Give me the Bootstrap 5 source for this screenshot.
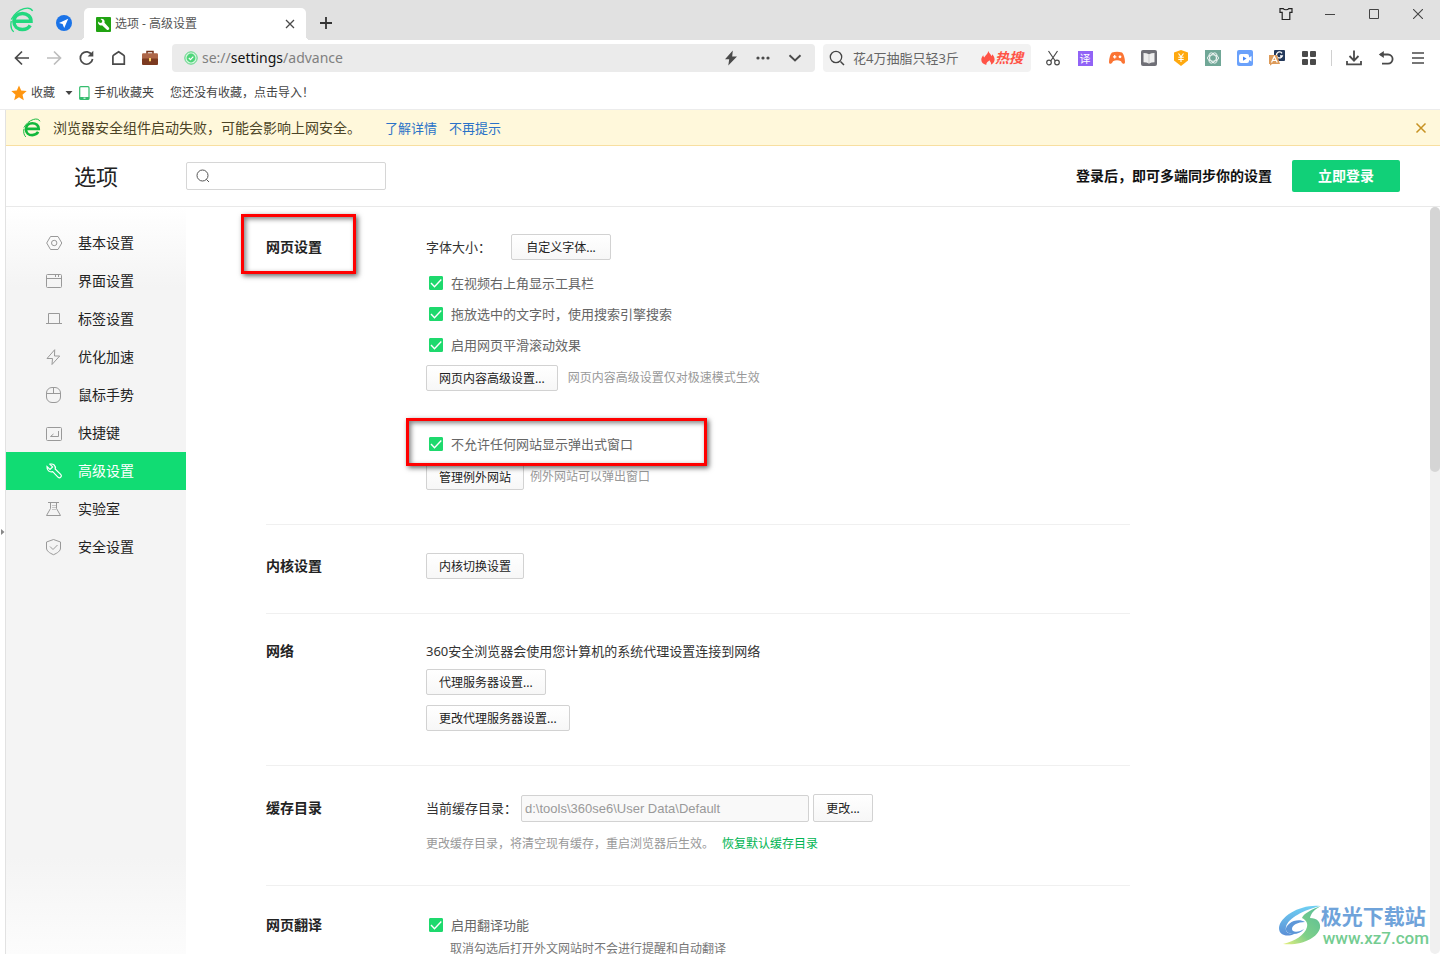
<!DOCTYPE html>
<html lang="zh-CN">
<head>
<meta charset="utf-8">
<meta name="viewport" content="width=device-width, initial-scale=1">
<title>选项 - 高级设置</title>
<link href="https://cdn.jsdelivr.net/npm/bootstrap@5.3.0/dist/css/bootstrap.min.css" rel="stylesheet">
<style>
:root{--ink:#222;--green:#11dc73}
body{font-family:"Noto Sans","Noto Sans CJK SC",sans-serif;font-size:13px;line-height:18px;color:#333;background:#fff}
button,input{font-family:inherit}
svg{display:block;flex:none}
.plain{border:0;background:none;padding:0;color:#4a4a4a;display:flex;align-items:center;justify-content:center;flex:none}
.fs12{font-size:12px}.fs14{font-size:14px}
/* window frame */
.titlebar{height:40px;background:#e1e1e1}
.brand-box{width:43px;height:40px}
.pin-box{width:41px;height:46px}
.page-tab{width:222px;height:32px;background:#fff;border-radius:5px 5px 0 0;padding:0 10px 0 12px;color:#555;position:relative}
.page-tab::before,.page-tab::after{content:"";position:absolute;bottom:0;width:4px;height:4px}
.page-tab::before{left:-4px;background:radial-gradient(circle at 0 0,#e1e1e1 4px,#fff 4px)}
.page-tab::after{right:-4px;background:radial-gradient(circle at 100% 0,#e1e1e1 4px,#fff 4px)}
.new-tab{width:24px;height:34px}
.win{width:44px;height:28px}
.toolbar{height:36px;padding:0 6px}
.tool{width:32px;height:32px}
.omni{height:28px;background:#ebebeb;border-radius:4px;padding-left:12px;margin-left:6px}
.omni-url{font-size:14px;color:#808080}
.omni-url b{font-weight:400;color:#111}
.hunt{width:208px;height:28px;background:#f2f2f2;border-radius:4px;padding:0 8px 0 6px;margin:0 6px 0 8px}
.hunt input{border:0;background:none;outline:0;width:100%;padding:0;color:#666;font-size:13px}
.hunt input::placeholder{color:#666;opacity:1}
.hot{color:#ff5346;font-size:14px;font-weight:700;font-style:italic;text-decoration:none;white-space:nowrap}
.trans{width:15px;height:15px;background:#9163f6;font-size:11px;line-height:15px}
.tool-rule{width:1px;height:16px;background:#d0d0d0;margin:0 6px}
.marks{height:34px;padding-left:11px;border-bottom:1px solid #ececec}
.marks a{color:#444;text-decoration:none}
/* page */
.gutter{width:6px;border-right:1px solid #e2e2e2}
.notice{height:36px;background:#fff8db;border-bottom:1px solid #f8dfa0;padding:0 12px 0 17px;color:#4c4426}
.notice a{color:#2a72c8;text-decoration:none}
.page-head{height:61px;border-bottom:1px solid #e9e9e9;padding-right:40px}
.page-title{width:180px;font-size:22px;line-height:30px;font-weight:400;color:var(--ink)}
.find{width:200px;height:28px;border:1px solid #d6d6d6;border-radius:2px;padding-left:9px}
.find input{border:0;outline:0;width:150px;background:none}
.login{width:108px;height:32px;background:#11d078;color:#fff;border:0;border-radius:2px;font-weight:700;font-size:14px;padding:0;margin-left:20px}
.side{width:180px;padding-top:17px;background:linear-gradient(#fff 0,#f4f4f4 80px,#f4f4f4 650px,#fcfcfc 747px)}
.side .nav-link{height:38px;padding:0 0 0 38px;gap:14px;font-size:14px;color:var(--ink);border-radius:0}
.side .nav-link svg{color:#999}
.side .nav-link.active,.side .nav-link.active svg{background:var(--green);color:#fff}
.settings{padding-left:80px}
.block{max-width:864px;padding:28px 0 34px;border-bottom:1px solid #f0f0f0}
.block-name{width:160px;font-size:14px;line-height:26px;font-weight:700;color:var(--ink);margin:0}
.block.tight .block-name{line-height:18px}
.block.tall .block-name{line-height:28px}
.cmd{height:26px;border:1px solid #d2d2d2;border-radius:2px;background:linear-gradient(#fff,#f7f7f7);color:var(--ink);font-size:12px;line-height:18px;padding:1px 12px 0;white-space:nowrap}
.cmd.wide{min-width:100px}.cmd.high{height:28px;min-width:60px}
.tick{height:31px;padding-left:3px;gap:8px;color:#666}
.tick .form-check-input{width:14px;height:14px;margin:0;border-radius:1px;flex:none}
.tick .form-check-input:checked{border-color:#1ed96d;background-color:#1ed96d;background-image:url("data:image/svg+xml,%3csvg xmlns='http://www.w3.org/2000/svg' viewBox='0 0 14 14'%3e%3cpath d='M2 7l3.500 3.800L12.300 3.500' fill='none' stroke='white' stroke-width='1.4'/%3e%3c/svg%3e");background-size:14px 14px}
.tick.short{height:22px}
.gap-block{margin-top:37px;margin-bottom:5px}
.faint{color:#999;font-size:12px}
.path{width:288px;height:27px;border:1px solid #d2d2d2;border-radius:2px;background:#f9f9f9;color:#999;font:13px "Liberation Sans",sans-serif;padding:0 3px}
.restore{color:#00b552;text-decoration:none}
/* red callouts over the settings */
.callout{position:absolute;border:3px solid #f00;box-shadow:2px 2px 5px rgba(0,0,0,.6),inset 2px 2px 5px rgba(0,0,0,.5);pointer-events:none;z-index:2}
.callout-name{left:-25px;top:-20px;width:115px;height:60px}
.callout-popup{left:-20px;top:-10px;width:301px;height:48px}
.rail{width:10px;background:#f0f0f0;border-radius:5px}
.rail-thumb{height:35.5%;background:#d5d5d5;border-radius:5px}
.stamp{position:absolute;right:11px;bottom:7px;z-index:3}
.stamp-name{font-size:21px;line-height:25px;font-weight:700;color:#6fa3da}
.stamp-site{font:500 17px/18px Roboto,"Liberation Sans",sans-serif;color:#74cc91;padding-left:2px}
</style>
</head>
<body class="vh-100 overflow-hidden d-flex flex-column position-relative">
<svg width="0" height="0" class="position-absolute" aria-hidden="true"><defs>
<symbol id="e-logo" viewBox="0 0 24 26"><g fill="none" stroke="currentColor"><path d="M4 14.200h17c0-4.600-3.600-7.600-8.500-7.600-5.200 0-8.600 3.300-8.600 7.900 0 4.800 3.500 8 8.500 8 3.600 0 6.300-1.500 7.800-4.200" stroke-width="3.500"/><path d="M1.200 12.500C4 7.500 8.500 3.200 14 1.600c3.500-1 7-.8 8.600 2.400M1.300 14c-1 4.500 0 8.500 2.400 10.900" stroke-width="1.300"/></g></symbol>
</defs></svg>

<header>
  <div class="titlebar d-flex align-items-end">
    <div class="brand-box d-flex align-items-center justify-content-center"><svg width="24" height="26" style="color:#22d87f"><use href="#e-logo"/></svg></div>
    <button class="plain pin-box align-self-start" aria-label="导航"><svg width="16" height="16" viewBox="0 0 16 16"><circle cx="8" cy="8" r="8" fill="#1a73e8"/><path d="M12.200 3.800L3 8l3.600 1.100L8.200 13z" fill="#fff"/></svg></button>
    <div class="page-tab d-flex align-items-center">
      <svg width="15" height="15" viewBox="0 0 15 15"><rect width="15" height="15" rx="1" fill="#21a312"/><path d="M4.500 2a3 3 0 0 1 4 3.800l4.300 4.600a1.500 1.500 0 0 1-2.200 2.100L6 8.200A3 3 0 0 1 2.200 4.400L4 6l2-.5.300-1.800z" fill="#fff"/></svg>
      <span class="fs12 ms-1 flex-grow-1">选项 - 高级设置</span>
      <button class="plain" aria-label="关闭标签"><svg width="12" height="12" viewBox="0 0 12 12"><path d="M2 2l8 8M10 2l-8 8" stroke="currentColor" stroke-width="1.300"/></svg></button>
    </div>
    <button class="plain new-tab ms-2" aria-label="新标签"><svg width="14" height="14" viewBox="0 0 14 14"><path d="M7 1v12M1 7h12" stroke="#333" stroke-width="1.800"/></svg></button>
    <div class="ms-auto d-flex align-self-start">
      <button class="plain win" aria-label="皮肤"><svg width="14" height="14" viewBox="0 0 14 14"><path d="M1 1.600h3.300c.6 1.500 4.800 1.500 5.400 0H13v3.800h-2.200v7.100H3.200V5.400H1z" fill="none" stroke="#222" stroke-width="1.200"/></svg></button>
      <button class="plain win" aria-label="最小化"><svg width="10" height="10" viewBox="0 0 10 10"><path d="M0 5.500h10" stroke="#444"/></svg></button>
      <button class="plain win" aria-label="最大化"><svg width="10" height="10" viewBox="0 0 10 10"><path d="M.5.500h9v9h-9z" fill="none" stroke="#444"/></svg></button>
      <button class="plain win" aria-label="关闭"><svg width="10" height="10" viewBox="0 0 10 10"><path d="M0 0l10 10M10 0L0 10" stroke="#444" stroke-width="1.100"/></svg></button>
    </div>
  </div>

  <div class="toolbar d-flex align-items-center">
    <button class="plain tool" aria-label="后退"><svg width="16" height="16" viewBox="0 0 16 16"><path d="M15 8H2M8 1.500L1.500 8 8 14.500" fill="none" stroke="currentColor" stroke-width="1.700"/></svg></button>
    <button class="plain tool" aria-label="前进"><svg width="16" height="16" viewBox="0 0 16 16"><path d="M1 8h13M8 1.500L14.500 8 8 14.500" fill="none" stroke="#bdbdbd" stroke-width="1.700"/></svg></button>
    <button class="plain tool" aria-label="刷新"><svg width="16" height="16" viewBox="0 0 16 16"><path d="M14 5.200A6.200 6.200 0 1 0 14.600 9" fill="none" stroke="currentColor" stroke-width="1.700"/><path d="M15.300.8v5.700H9.600z" fill="currentColor"/></svg></button>
    <button class="plain tool" aria-label="主页"><svg width="16" height="16" viewBox="0 0 16 16"><path d="M8.600 1.700l4.800 3.200q.9.500.9 1.500v7.700H2.900V6.400q0-1 .9-1.500z" fill="none" stroke="currentColor" stroke-width="1.700"/></svg></button>
    <button class="plain tool" aria-label="工具箱"><svg width="18" height="16" viewBox="0 0 18 16"><path d="M6 4V1.500h6V4" fill="none" stroke="#75351c" stroke-width="1.500"/><rect x="1" y="3.200" width="16" height="6" rx="1.200" fill="#ad6648"/><path d="M1 8.600h16V14q0 1-1 1H2q-1 0-1-1z" fill="#7c3a20"/><rect x="8" y="8" width="2" height="3.300" fill="#ffd66b"/></svg></button>
    <div class="omni d-flex align-items-center flex-grow-1">
      <svg width="14" height="14" viewBox="0 0 14 14"><circle cx="7" cy="7" r="6.200" fill="#d3f5dd" stroke="#58d480"/><circle cx="7" cy="7" r="4.400" fill="#4fd57a"/><path d="M4.800 7l1.700 1.600L9.300 5.600" fill="none" stroke="#fff" stroke-width="1.200"/></svg>
      <span class="omni-url ms-1 flex-grow-1">se://<b>settings</b>/advance</span>
      <button class="plain tool" aria-label="极速模式"><svg width="14" height="16" viewBox="0 0 14 16"><path d="M8.800.5L1 9.200h4.200L4.300 15.500 13 6.600H8.200z" fill="currentColor"/></svg></button>
      <button class="plain tool" aria-label="更多"><svg width="14" height="4" viewBox="0 0 14 4"><g fill="currentColor"><circle cx="2" cy="2" r="1.600"/><circle cx="7" cy="2" r="1.600"/><circle cx="12" cy="2" r="1.600"/></g></svg></button>
      <button class="plain tool me-1" aria-label="展开"><svg width="14" height="8" viewBox="0 0 14 8"><path d="M1.500 1.200L7 6.500l5.500-5.300" fill="none" stroke="currentColor" stroke-width="1.900"/></svg></button>
    </div>
    <div class="hunt d-flex align-items-center">
      <svg width="16" height="16" viewBox="0 0 16 16"><path d="M11.500 11.500L15 15" stroke="#444" stroke-width="1.500"/><circle cx="7" cy="7" r="5.700" fill="none" stroke="#444" stroke-width="1.300"/></svg>
      <input class="ms-2" aria-label="搜索" placeholder="花4万抽脂只轻3斤">
      <a class="hot d-flex align-items-center" href="#"><svg width="14" height="14" viewBox="0 0 14 14"><path d="M7.300 0c.6 2.300 3 3.300 3.200 5.200.5-.5.700-1.200.7-1.900 3.600 3.500 3.200 8.700-1.400 10.500.9-1.800-.6-3-1.300-4.600C7 10.500 5 11.500 5.300 14-.8 12.500-.7 7.300 2.300 4.200c.1 1 .3 1.600.9 2.200C4.300 4.500 7 3 7.300 0z" fill="currentColor"/></svg><span>热搜</span></a>
    </div>
    <button class="plain tool" aria-label="截图"><svg width="16" height="16" viewBox="0 0 16 16"><path d="M3.500 1l6.800 10M12.500 1L5.700 11" stroke="currentColor" stroke-width="1.200"/><g fill="none" stroke="currentColor" stroke-width="1.200"><circle cx="4" cy="12.500" r="2.300"/><circle cx="12" cy="12.500" r="2.300"/></g></svg></button>
    <button class="plain tool" aria-label="翻译"><span class="trans d-flex align-items-center justify-content-center text-white">译</span></button>
    <button class="plain tool" aria-label="游戏"><svg width="18" height="16" viewBox="0 0 18 16"><path d="M4 2.500q5-1.500 10 0 2.600 2.500 3 9.500c0 2.500-2.500 2.500-4-.8q-4-2-8 0C3.500 14.500 1 14.500 1 12q.4-7 3-9.500z" fill="#fb7433"/><path d="M5 6.800h3.400M6.700 5.100v3.400" stroke="#fff" stroke-width="1.200"/><circle cx="12" cy="6.800" r="1.400" fill="#fff"/></svg></button>
    <button class="plain tool" aria-label="阅读"><svg width="16" height="16" viewBox="0 0 16 16"><rect width="16" height="16" rx="2" fill="#6f6f76"/><path d="M2.500 3q3 0 5.500 1.300Q10.500 3 13.500 3v9.300q-3 0-5.500 1.300-2.500-1.300-5.500-1.300z" fill="#eee"/><path d="M8 4.300v9.300" stroke="#bbb" stroke-width=".7"/></svg></button>
    <button class="plain tool" aria-label="优惠"><svg width="16" height="16" viewBox="0 0 16 16"><path d="M8 0l7 2.500v8L8 16l-7-5.500v-8z" fill="#ffa90f"/><path d="M5.500 3.500L8 6.800l2.500-3.300M8 6.800V12M5.300 7.300h5.400M5.300 9.500h5.400" fill="none" stroke="#fff" stroke-width="1.100"/></svg></button>
    <button class="plain tool" aria-label="智能助手"><svg width="16" height="16" viewBox="0 0 16 16"><rect width="16" height="16" fill="#70a797"/><g fill="none" stroke="#fff" stroke-width=".8"><ellipse cx="8" cy="8" rx="5.600" ry="3.200"/><ellipse cx="8" cy="8" rx="5.600" ry="3.200" transform="rotate(60 8 8)"/><ellipse cx="8" cy="8" rx="5.600" ry="3.200" transform="rotate(120 8 8)"/></g></svg></button>
    <button class="plain tool" aria-label="视频"><svg width="16" height="16" viewBox="0 0 16 16"><rect width="16" height="16" rx="2" fill="#6aa1fb"/><rect x="2" y="4" width="10" height="9" rx="2" fill="#fff"/><path d="M12 7.500l2.500-1.500v5.500L12 10z" fill="#fff"/><path d="M6 6.500l3.500 2.100L6 10.700z" fill="#4587f7"/></svg></button>
    <button class="plain tool" aria-label="双语"><svg width="16" height="16" viewBox="0 0 16 16"><rect x="5" width="11" height="11" rx="1" fill="#24395b"/><path d="M13 3.300a3 3 0 1 0 .3 2.700H11" fill="none" stroke="#fff" stroke-width="1.300"/><path d="M0 5h8l3 9H3l-2 1.800V14H0z" fill="#dd9b5a"/><path d="M2.500 12.500L5.300 6.500 8.300 12.500M3.500 10.500h4" fill="none" stroke="#fff" stroke-width="1.200"/></svg></button>
    <button class="plain tool" aria-label="扩展"><svg width="14" height="14" viewBox="0 0 14 14"><g fill="currentColor"><rect width="6" height="6" rx="1"/><rect x="8" width="6" height="6" rx="1"/><rect y="8" width="6" height="6" rx="1"/><rect x="8" y="8" width="6" height="6" rx="1"/></g></svg></button>
    <span class="tool-rule"></span>
    <button class="plain tool" aria-label="下载"><svg width="16" height="16" viewBox="0 0 16 16"><path d="M8 .5v10M3.500 6L8 10.600 12.500 6M1 11v3.300h14V11" fill="none" stroke="currentColor" stroke-width="1.800"/></svg></button>
    <button class="plain tool" aria-label="恢复"><svg width="16" height="16" viewBox="0 0 16 16"><path d="M2.500 4.500H10a4.600 4.600 0 0 1 0 9.200H4" fill="none" stroke="currentColor" stroke-width="1.800"/><path d="M.8 4.500L5.800 1v7z" fill="currentColor"/></svg></button>
    <button class="plain tool" aria-label="菜单"><svg width="12" height="14" viewBox="0 0 12 14"><path d="M0 2h12M0 7h12M0 12h12" stroke="currentColor" stroke-width="1.700"/></svg></button>
  </div>

  <nav class="marks d-flex align-items-center fs12" aria-label="收藏栏">
    <a href="#" class="d-flex align-items-center"><svg width="16" height="16" viewBox="0 0 16 16" class="me-1"><path d="M8 .5l2.200 5.100 5.500.5-4.200 3.600 1.300 5.500L8 12.300l-4.800 2.900 1.300-5.500L.3 6.100l5.500-.5z" fill="#ff9610"/></svg>收藏</a>
    <button class="plain ms-2" aria-label="收藏列表"><svg width="12" height="6" viewBox="0 0 12 6"><path d="M2.500 1h7L6 5z" fill="#444"/></svg></button>
    <a href="#" class="d-flex align-items-center ms-1"><svg width="11" height="14" viewBox="0 0 11 14" class="me-1"><rect x=".7" y=".7" width="9.300" height="12.600" rx="1" fill="none" stroke="#35bd6e" stroke-width="1.200"/><path d="M.5 11h9.700v2.500H.5z" fill="#35bd6e"/><path d="M4.500 12.200h2" stroke="#fff"/></svg>手机收藏夹</a>
    <a href="#" class="ms-3">您还没有收藏，点击导入！</a>
  </nav>
</header>

<div class="d-flex flex-grow-1 overflow-hidden">
  <div class="gutter flex-shrink-0 d-flex align-items-center"><svg width="5" height="8" viewBox="0 0 5 8"><path d="M1 1l3.500 3L1 7z" fill="#888"/></svg></div>
  <div class="d-flex flex-column flex-grow-1 overflow-hidden">
    <div class="notice d-flex align-items-center flex-shrink-0" role="status">
      <svg width="18" height="20" style="color:#12b83c"><use href="#e-logo"/></svg>
      <span class="fs14" style="margin-left:12px">浏览器安全组件启动失败，可能会影响上网安全。</span>
      <a href="#" class="ms-4">了解详情</a><a href="#" class="ms-2 ps-1 flex-grow-1">不再提示</a>
      <button class="plain" aria-label="关闭提示"><svg width="14" height="14" viewBox="0 0 14 14"><path d="M2.500 2.500l9 9M11.500 2.500l-9 9" stroke="#c79222" stroke-width="1.500"/></svg></button>
    </div>
    <div class="page-head d-flex align-items-center flex-shrink-0">
      <h1 class="page-title text-center m-0">选项</h1>
      <label class="find d-flex align-items-center gap-2"><svg width="14" height="14" viewBox="0 0 14 14"><circle cx="6.500" cy="6.500" r="5.500" fill="none" stroke="#555"/><path d="M10.300 10.300L13 13" stroke="#555"/></svg><input type="text" aria-label="搜索设置"></label>
      <strong class="ms-auto fs14" style="color:#111">登录后，即可多端同步你的设置</strong>
      <button class="login">立即登录</button>
    </div>
    <div class="d-flex flex-grow-1 overflow-hidden">
      <nav class="side nav flex-column flex-nowrap flex-shrink-0" aria-label="设置分类">
        <a class="nav-link d-flex align-items-center" href="#"><svg width="20" height="20" viewBox="0 0 20 20" fill="none" stroke="currentColor"><path d="M6.500 3.500h7.500l3.800 6.500-3.800 6.500H6.500L2.700 10z"/><circle cx="10.200" cy="10" r="2.700"/></svg>基本设置</a>
        <a class="nav-link d-flex align-items-center" href="#"><svg width="20" height="20" viewBox="0 0 20 20" fill="none" stroke="currentColor"><rect x="2.500" y="3.500" width="15" height="13" rx="1"/><path d="M2.500 7.500h15M11.500 4v2M14.500 4v2"/></svg>界面设置</a>
        <a class="nav-link d-flex align-items-center" href="#"><svg width="20" height="20" viewBox="0 0 20 20" fill="none" stroke="currentColor"><path d="M2 14.500h16M4.500 14.500v-10h11v10"/></svg>标签设置</a>
        <a class="nav-link d-flex align-items-center" href="#"><svg width="20" height="20" viewBox="0 0 20 20" fill="none" stroke="currentColor"><path d="M10.700 2.700L3 11.500h5.500l-.5 6 7.700-8.500h-5.200z"/></svg>优化加速</a>
        <a class="nav-link d-flex align-items-center" href="#"><svg width="20" height="20" viewBox="0 0 20 20" fill="none" stroke="currentColor"><rect x="2.500" y="2.500" width="14" height="15" rx="5.500"/><path d="M2.500 8.500h14M9.500 2.500v6"/></svg>鼠标手势</a>
        <a class="nav-link d-flex align-items-center" href="#"><svg width="20" height="20" viewBox="0 0 20 20" fill="none" stroke="currentColor"><rect x="2.500" y="4.500" width="15" height="13" rx="1"/><path d="M14.500 8v5.500H6.500l3-2.500"/></svg>快捷键</a>
        <a class="nav-link active d-flex align-items-center" aria-current="page" href="#"><svg width="20" height="20" viewBox="0 0 20 20" fill="none" stroke="currentColor" stroke-width="1.200"><path d="M6 3.200c3.200-.9 6 1.500 5.200 4.800l5.700 5.600c1.500 1.700-1 4.200-2.700 2.700L8.700 10.600c-3.200 1-6-1.300-5.700-5l3 2.800 2.600-2.500z"/></svg>高级设置</a>
        <a class="nav-link d-flex align-items-center" href="#"><svg width="20" height="20" viewBox="0 0 20 20" fill="none" stroke="currentColor"><path d="M4 3.500h11M6.500 3.500v6l-4 7h14l-4-7v-6"/><path d="M9 6v6M11 6v6" stroke-dasharray="1 1"/></svg>实验室</a>
        <a class="nav-link d-flex align-items-center" href="#"><svg width="20" height="20" viewBox="0 0 20 20" fill="none" stroke="currentColor"><path d="M9.500 2.500L2.500 5v6c0 3 3 5 7 6.700 4-1.700 7-3.700 7-6.700V5z"/><path d="M6 9.500l3 3 4.500-4.500"/></svg>安全设置</a>
      </nav>

      <main class="settings flex-grow-1 overflow-hidden">
        <section class="block d-flex" style="padding-top:27px">
          <div class="position-relative align-self-start"><h2 class="block-name">网页设置</h2><span class="callout callout-name"></span></div>
          <div>
            <div class="d-flex align-items-center" style="margin-bottom:7px"><span>字体大小：</span><button class="cmd wide" style="margin-left:20px">自定义字体...</button></div>
            <label class="tick d-flex align-items-center"><input class="form-check-input" type="checkbox" checked>在视频右上角显示工具栏</label>
            <label class="tick d-flex align-items-center"><input class="form-check-input" type="checkbox" checked>拖放选中的文字时，使用搜索引擎搜索</label>
            <label class="tick d-flex align-items-center"><input class="form-check-input" type="checkbox" checked>启用网页平滑滚动效果</label>
            <div class="d-flex align-items-center" style="margin-top:5px"><button class="cmd">网页内容高级设置...</button><span class="faint" style="margin-left:10px">网页内容高级设置仅对极速模式生效</span></div>
            <div class="gap-block position-relative">
              <label class="tick d-flex align-items-center"><input class="form-check-input" type="checkbox" checked>不允许任何网站显示弹出式窗口</label>
              <span class="callout callout-popup"></span>
            </div>
            <div class="d-flex align-items-center"><button class="cmd">管理例外网站</button><span class="faint" style="margin-left:6px">例外网站可以弹出窗口</span></div>
          </div>
        </section>
        <section class="block d-flex">
          <h2 class="block-name">内核设置</h2>
          <div><button class="cmd d-block">内核切换设置</button></div>
        </section>
        <section class="block tight d-flex">
          <h2 class="block-name">网络</h2>
          <div>
            <p style="margin-bottom:9px">360安全浏览器会使用您计算机的系统代理设置连接到网络</p>
            <button class="cmd d-block" style="margin-bottom:10px">代理服务器设置...</button>
            <button class="cmd d-block">更改代理服务器设置...</button>
          </div>
        </section>
        <section class="block tall d-flex" style="padding-bottom:32px">
          <h2 class="block-name">缓存目录</h2>
          <div>
            <div class="d-flex align-items-center gap-1"><label for="cache">当前缓存目录：</label><input id="cache" class="path" type="text" readonly value="d:\tools\360se6\User Data\Default"><button class="cmd high">更改...</button></div>
            <div class="faint d-flex" style="margin-top:13px"><span>更改缓存目录，将清空现有缓存，重启浏览器后生效。</span><a class="restore ms-2" href="#">恢复默认缓存目录</a></div>
          </div>
        </section>
        <section class="block d-flex">
          <h2 class="block-name" style="line-height:22px">网页翻译</h2>
          <div>
            <label class="tick short d-flex align-items-center"><input class="form-check-input" type="checkbox" checked>启用翻译功能</label>
            <div class="faint ms-4 mt-1" style="color:#777">取消勾选后打开外文网站时不会进行提醒和自动翻译</div>
          </div>
        </section>
      </main>
      <div class="rail flex-shrink-0"><div class="rail-thumb"></div></div>
    </div>
  </div>
</div>

<div class="stamp d-flex align-items-center">
  <svg width="42" height="42" viewBox="0 0 42 42"><defs><linearGradient id="sky" x2="0" y2="1"><stop stop-color="#6fd0f3"/><stop offset="1" stop-color="#5b8fd6"/></linearGradient><linearGradient id="leaf" x1="1" x2="0" y2="1"><stop stop-color="#57bd97"/><stop offset=".6" stop-color="#7fd089"/><stop offset="1" stop-color="#e9f07e"/></linearGradient></defs>
  <path d="M41 1C22-1 1 11 0 23c0 8 9 9 15 6-6 0-9-2-8-7C9 13 25 5 41 1z" fill="url(#sky)"/><path d="M26 17c-8-5-20 2-19 8 1 5 13 6 18-1-4 3-12 4-12 0 0-4 6-7 13-7z" fill="#5d97d8"/><path d="M42 1C33 4 24 9 23 13c4 2 6 5 5 9-2 8-12 14-24 17 20 2 35-7 37-16 1-6-3-10-10-10 1-5 5-9 11-12z" fill="url(#leaf)"/></svg>
  <div><div class="stamp-name">极光下载站</div><div class="stamp-site">www.xz7.com</div></div>
</div>
<script src="https://cdn.jsdelivr.net/npm/bootstrap@5.3.0/dist/js/bootstrap.bundle.min.js"></script>
</body>
</html>
